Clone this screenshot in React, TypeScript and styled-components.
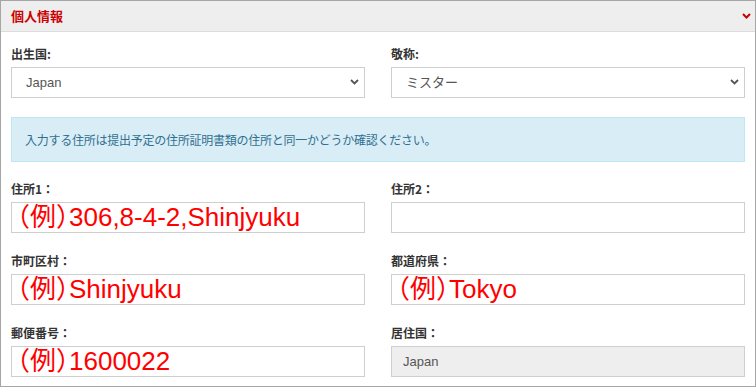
import React from "react";
import styled, { createGlobalStyle } from "styled-components";

const Global = createGlobalStyle`
  html, body { margin: 0; padding: 0; background: #fff; }
  body { font-family: "Liberation Sans", "Noto Sans CJK JP", sans-serif; color: #333; }
  * { box-sizing: border-box; }
`;

const Panel = styled.section`
  width: 756px;
  height: 387px;
  border: 1px solid #a6a6a6;
  background: #fff;
`;

const Header = styled.header`
  height: 31px;
  background: #eeeeee;
  border-bottom: 1px solid #dcdcdc;
  display: flex;
  align-items: center;
  justify-content: space-between;
  padding: 0 4px 1px 10px;
`;

const Title = styled.h3`
  margin: 0;
  font-family: "Noto Sans CJK JP", sans-serif;
  font-size: 13px;
  font-weight: bold;
  color: #cc0000;
  line-height: 18px;
`;

const Body = styled.div`
  padding: 13px 10px 9px;
`;

const Row = styled.div`
  display: grid;
  grid-template-columns: 1fr 1fr;
  column-gap: 26px;
  margin-bottom: 19px;
  &:last-child { margin-bottom: 0; }
`;

const Field = styled.div`
  display: flex;
  flex-direction: column;
`;

const Label = styled.label`
  display: block;
  font-family: "Noto Sans CJK JP", sans-serif;
  font-size: 12px;
  line-height: 17px;
  font-weight: bold;
  color: #333;
  margin-bottom: 5px;
`;

const SelectWrap = styled.div`
  position: relative;
  height: 31px;
`;

const Select = styled.select`
  width: 100%;
  height: 31px;
  appearance: none;
  -webkit-appearance: none;
  border: 1px solid #cfcfcf;
  border-radius: 0;
  background: #fff;
  padding: 0 14px;
  font-family: "Liberation Sans", "Noto Sans CJK JP", sans-serif;
  font-size: 13px;
  color: #555;
  outline: none;
`;

const Chevron = styled.svg`
  position: absolute;
  right: 6px;
  top: 12px;
  width: 9px;
  height: 6px;
  pointer-events: none;
`;

const Alert = styled.div`
  height: 45px;
  margin-bottom: 18px;
  background: #d9edf7;
  border: 1px solid #bce8f1;
  color: #31708f;
  display: flex;
  align-items: center;
  padding: 0 13px;
  font-family: "Noto Sans CJK JP", sans-serif;
  font-size: 12px;
  letter-spacing: -0.25px;
`;

const TextInput = styled.input`
  width: 100%;
  height: 31px;
  border: 1px solid #cfcfcf;
  border-radius: 0;
  background: #fff;
  padding: 0 2px 0 5px;
  font-family: "Liberation Sans", "Noto Sans CJK JP", sans-serif;
  font-feature-settings: "halt";
  font-size: 26px;
  line-height: 29px;
  color: #f00;
  outline: none;
  &::placeholder { color: #f00; opacity: 1; }
`;

const StaticInput = styled.input`
  width: 100%;
  height: 31px;
  border: 1px solid #cfcfcf;
  border-radius: 0;
  background: #eeeeee;
  padding: 0 11px;
  font-family: "Liberation Sans", "Noto Sans CJK JP", sans-serif;
  font-size: 13px;
  color: #555;
  outline: none;
  &:disabled { color: #555; -webkit-text-fill-color: #555; opacity: 1; }
`;

const ChevronIcon: React.FC<{ color: string }> = ({ color }) => (
  <svg width="9" height="6" viewBox="0 0 9 6">
    <path d="M1 1 L4.5 4.5 L8 1" fill="none" stroke={color} strokeWidth="2" />
  </svg>
);

const SelectChevron = () => (
  <Chevron viewBox="0 0 9 6">
    <path d="M1 1 L4.5 4.5 L8 1" fill="none" stroke="#555" strokeWidth="1.8" />
  </Chevron>
);

export default function App() {
  return (
    <>
      <Global />
      <Panel>
        <Header>
          <Title>個人情報</Title>
          <ChevronIcon color="#cc0000" />
        </Header>
        <Body>
          <Row>
            <Field>
              <Label>出生国:</Label>
              <SelectWrap>
                <Select defaultValue="Japan">
                  <option>Japan</option>
                </Select>
                <SelectChevron />
              </SelectWrap>
            </Field>
            <Field>
              <Label>敬称:</Label>
              <SelectWrap>
                <Select defaultValue="ミスター">
                  <option>ミスター</option>
                </Select>
                <SelectChevron />
              </SelectWrap>
            </Field>
          </Row>
          <Alert>入力する住所は提出予定の住所証明書類の住所と同一かどうか確認ください。</Alert>
          <Row>
            <Field>
              <Label>住所1：</Label>
              <TextInput placeholder="（例）306,8-4-2,Shinjyuku" />
            </Field>
            <Field>
              <Label>住所2：</Label>
              <TextInput />
            </Field>
          </Row>
          <Row>
            <Field>
              <Label>市町区村：</Label>
              <TextInput placeholder="（例）Shinjyuku" />
            </Field>
            <Field>
              <Label>都道府県：</Label>
              <TextInput placeholder="（例）Tokyo" />
            </Field>
          </Row>
          <Row>
            <Field>
              <Label>郵便番号：</Label>
              <TextInput placeholder="（例）1600022" />
            </Field>
            <Field>
              <Label>居住国：</Label>
              <StaticInput value="Japan" disabled readOnly />
            </Field>
          </Row>
        </Body>
      </Panel>
    </>
  );
}
